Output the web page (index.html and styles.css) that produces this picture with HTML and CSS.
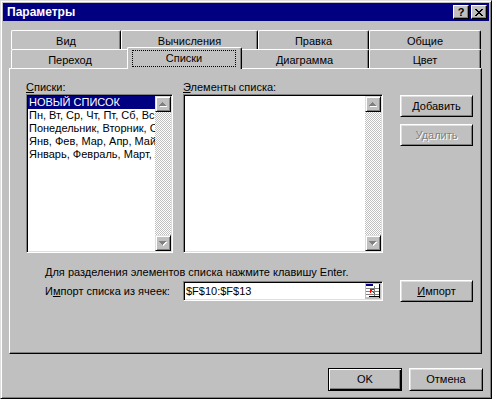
FILE: index.html
```html
<!DOCTYPE html>
<html lang="ru">
<head>
  <meta charset="UTF-8" />
  <title>Параметры</title>
  <link rel="stylesheet" href="styles.css">
</head>
<body>

  <div class="window">
    <!-- Title bar -->
    <div class="titlebar">
      <span class="title">Параметры</span>
      <div class="caption-buttons">
        <div class="cap-btn">?</div>
        <div class="cap-btn">
          <svg width="8" height="7" viewBox="0 0 8 7" shape-rendering="crispEdges">
            <path fill="#000" d="M0 0h2v1H0zM6 0h2v1H6zM1 1h2v1H1zM5 1h2v1H5zM2 2h4v1H2zM3 3h2v1H3zM2 4h4v1H2zM1 5h2v1H1zM5 5h2v1H5zM0 6h2v1H0zM6 6h2v1H6z"/>
          </svg>
        </div>
      </div>
    </div>

    <div class="content">
      <!-- Tabs -->
      <div class="tabs">
        <div class="tab-row">
          <div class="tab t-vid">Вид</div>
          <div class="tab t-calc">Вычисления</div>
          <div class="tab t-edit">Правка</div>
          <div class="tab t-general">Общие</div>
        </div>
        <div class="tab-row">
          <div class="tab t-goto">Переход</div>
          <div class="tab t-lists active"><span class="focus">Списки</span></div>
          <div class="tab t-chart">Диаграмма</div>
          <div class="tab t-color">Цвет</div>
        </div>
      </div>

      <!-- Tab page -->
      <div class="panel">
        <div class="lists-row">
          <div class="col-lists">
            <div class="label"><u>С</u>писки:</div>
            <div class="listbox">
              <div class="items">
                <div class="item selected">НОВЫЙ СПИСОК</div>
                <div class="item">Пн, Вт, Ср, Чт, Пт, Сб, Вс</div>
                <div class="item">Понедельник, Вторник, Среда</div>
                <div class="item">Янв, Фев, Мар, Апр, Май, Июн</div>
                <div class="item">Январь, Февраль, Март, Апрель</div>
              </div>
              <div class="scrollbar">
                <div class="sb-btn">
                  <svg width="12" height="12" viewBox="0 0 12 12" shape-rendering="crispEdges">
                    <path fill="#fff" d="M6 5h1v1H6zM5 6h3v1H5zM4 7h5v1H4zM3 8h7v1H3z"/>
                    <path fill="#808080" d="M5 4h1v1H5zM4 5h3v1H4zM3 6h5v1H3zM2 7h7v1H2z"/>
                  </svg>
                </div>
                <div class="sb-track"></div>
                <div class="sb-btn">
                  <svg width="12" height="12" viewBox="0 0 12 12" shape-rendering="crispEdges">
                    <path fill="#fff" d="M3 5h7v1H3zM4 6h5v1H4zM5 7h3v1H5zM6 8h1v1H6z"/>
                    <path fill="#808080" d="M2 4h7v1H2zM3 5h5v1H3zM4 6h3v1H4zM5 7h1v1H5z"/>
                  </svg>
                </div>
              </div>
            </div>
          </div>

          <div class="col-items">
            <div class="label"><u>Э</u>лементы списка:</div>
            <div class="listbox">
              <div class="items"></div>
              <div class="scrollbar">
                <div class="sb-btn">
                  <svg width="12" height="12" viewBox="0 0 12 12" shape-rendering="crispEdges">
                    <path fill="#fff" d="M6 5h1v1H6zM5 6h3v1H5zM4 7h5v1H4zM3 8h7v1H3z"/>
                    <path fill="#808080" d="M5 4h1v1H5zM4 5h3v1H4zM3 6h5v1H3zM2 7h7v1H2z"/>
                  </svg>
                </div>
                <div class="sb-track"></div>
                <div class="sb-btn">
                  <svg width="12" height="12" viewBox="0 0 12 12" shape-rendering="crispEdges">
                    <path fill="#fff" d="M3 5h7v1H3zM4 6h5v1H4zM5 7h3v1H5zM6 8h1v1H6z"/>
                    <path fill="#808080" d="M2 4h7v1H2zM3 5h5v1H3zM4 6h3v1H4zM5 7h1v1H5z"/>
                  </svg>
                </div>
              </div>
            </div>
          </div>

          <div class="col-buttons">
            <div class="btn"><span><u>Д</u>обавить</span></div>
            <div class="btn disabled">Удалить</div>
          </div>
        </div>

        <div class="hint">Для разделения элементов списка нажмите клавишу Enter.</div>

        <div class="import-row">
          <div class="import-label">И<u>м</u>порт списка из ячеек:</div>
          <div class="refedit">
            <span class="ref-text">$F$10:$F$13</span>
            <div class="ref-btn">
              <svg width="16" height="16" viewBox="0 0 16 16" shape-rendering="crispEdges">
                <rect x="1" y="1" width="13" height="13" fill="#fff"/>
                <rect x="1" y="1" width="7" height="2" fill="#000080"/>
                <path fill="#808080" d="M1 5h13v1H1zM1 8h13v1H1zM1 11h13v1H1zM9 3h1v11H9z"/>
                <path fill="#f00" d="M5 6h4v1H5zM5 7h1v3H5zM6 7h1v1H6zM7 8h1v1H7zM8 9h1v1H8zM9 10h1v1H9z"/>
                <rect x="4" y="13" width="10" height="1" fill="#000"/>
                <rect x="14" y="1" width="1" height="14" fill="#000"/>
              </svg>
            </div>
          </div>
          <div class="btn import-btn"><span><u>И</u>мпорт</span></div>
        </div>
      </div>

      <!-- Dialog buttons -->
      <div class="footer">
        <div class="btn big default">OK</div>
        <div class="btn big">Отмена</div>
      </div>
    </div>
  </div>

</body>
</html>
```

FILE: styles.css
```css
body {
  margin: 0;
  font-family: "Liberation Sans", Arial, sans-serif;
  font-size: 11px;
  color: #000;
  background: #c0c0c0;
}

u {
  text-decoration: underline;
  text-underline-offset: 1px;
}

/* Window frame */
.window {
  width: 492px;
  height: 399px;
  box-sizing: border-box;
  background: #c0c0c0;
  border: 1px solid;
  border-color: #dfdfdf #000 #000 #dfdfdf;
  box-shadow: inset 1px 1px #fff, inset -1px -1px #808080;
  padding: 2px;
}

.titlebar {
  height: 18px;
  background: #000080;
  color: #fff;
  display: flex;
  align-items: center;
  justify-content: space-between;
  padding: 0 2px 0 4px;
}

.title {
  font-weight: bold;
  font-size: 12px;
}

.caption-buttons {
  display: flex;
  gap: 2px;
}

.cap-btn {
  width: 16px;
  height: 14px;
  box-sizing: border-box;
  background: #c0c0c0;
  border: 1px solid;
  border-color: #fff #000 #000 #fff;
  box-shadow: inset -1px -1px #808080;
  display: flex;
  align-items: center;
  justify-content: center;
  color: #000;
  font-weight: bold;
  font-size: 11px;
  line-height: 11px;
}

.content {
  padding-top: 9px;
}

/* Tabs */
.tabs {
  margin-left: 8px;
}

.tab-row {
  display: flex;
  align-items: flex-start;
  height: 19px;
}

.tab {
  box-sizing: border-box;
  height: 19px;
  background: #c0c0c0;
  border-top: 1px solid #fff;
  border-left: 1px solid #fff;
  border-right: 1px solid #000;
  border-radius: 2px 2px 0 0;
  box-shadow: inset -1px 0 #808080;
  text-align: center;
  line-height: 13px;
  padding-top: 4px;
}

.t-vid { width: 110px; }
.t-calc { width: 137px; }
.t-edit { width: 111px; }
.t-general { width: 112px; }
.t-goto { width: 118px; }
.t-lists { width: 111px; }
.t-chart { width: 129px; }
.t-color { width: 112px; }

.tab.active {
  width: 115px;
  height: 22px;
  margin: -2px -2px -1px;
  position: relative;
  z-index: 1;
  padding: 2px 5px 0 4px;
}

.focus {
  display: block;
  height: 17px;
  box-sizing: border-box;
  border: 1px dotted #000;
  line-height: 15px;
}

/* Tab page */
.panel {
  box-sizing: border-box;
  width: 473px;
  height: 286px;
  margin-left: 6px;
  border: 1px solid;
  border-color: #fff #000 #000 #fff;
  box-shadow: inset -1px -1px #808080;
  padding: 12px 0 0 16px;
}

.lists-row {
  display: flex;
}

.label {
  height: 13px;
  line-height: 13px;
}

.col-lists {
  width: 147px;
  margin-right: 10px;
}

.col-items {
  width: 200px;
  margin-right: 17px;
}

.col-buttons {
  padding-top: 14px;
  display: flex;
  flex-direction: column;
  gap: 7px;
}

.listbox {
  height: 159px;
  box-sizing: border-box;
  background: #fff;
  border: 1px solid;
  border-color: #808080 #fff #fff #808080;
  box-shadow: inset 1px 1px #000, inset -1px -1px #dfdfdf;
  padding: 1px;
  display: flex;
}

.items {
  flex: 1;
  overflow: hidden;
}

.item {
  height: 13px;
  line-height: 13px;
  padding-left: 1px;
  white-space: nowrap;
}

.item.selected {
  background: #000080;
  color: #fff;
}

.scrollbar {
  width: 16px;
  display: flex;
  flex-direction: column;
}

.sb-btn {
  width: 16px;
  height: 16px;
  box-sizing: border-box;
  background: #c0c0c0;
  border: 1px solid;
  border-color: #dfdfdf #000 #000 #dfdfdf;
  box-shadow: inset 1px 1px #fff, inset -1px -1px #808080;
  padding: 1px;
}

.sb-btn svg {
  display: block;
}

.sb-track {
  flex: 1;
  background: repeating-conic-gradient(#c0c0c0 0 25%, #fff 0 50%) 0 0 / 2px 2px;
}

/* Buttons */
.btn {
  box-sizing: border-box;
  width: 73px;
  height: 22px;
  background: #c0c0c0;
  border: 1px solid;
  border-color: #fff #000 #000 #fff;
  box-shadow: inset 1px 1px #dfdfdf, inset -1px -1px #808080;
  display: flex;
  align-items: center;
  justify-content: center;
  line-height: 13px;
}

.btn.disabled {
  color: #808080;
  text-shadow: 1px 1px #fff;
}

.btn.big {
  width: 74px;
  height: 23px;
}

.btn.default {
  border-color: #000;
  box-shadow: inset 1px 1px #fff, inset -1px -1px #000, inset -2px -2px #808080;
}

/* Import row */
.hint {
  margin: 13px 0 0 19px;
  line-height: 13px;
}

.import-row {
  display: flex;
  align-items: center;
  height: 22px;
  margin-top: 1px;
}

.import-label {
  width: 138px;
  margin-left: 19px;
}

.refedit {
  box-sizing: border-box;
  width: 200px;
  height: 20px;
  background: #fff;
  border: 1px solid;
  border-color: #808080 #fff #fff #808080;
  box-shadow: inset 1px 1px #000, inset -1px -1px #dfdfdf;
  display: flex;
  align-items: center;
  justify-content: space-between;
  padding: 0 1px 0 2px;
}

.ref-btn {
  background: #c0c0c0;
  height: 16px;
}

.ref-btn svg {
  display: block;
}

.import-btn {
  margin-left: 17px;
}

/* Dialog buttons */
.footer {
  display: flex;
  justify-content: flex-end;
  gap: 7px;
  margin-top: 14px;
  padding-right: 6px;
}
```
